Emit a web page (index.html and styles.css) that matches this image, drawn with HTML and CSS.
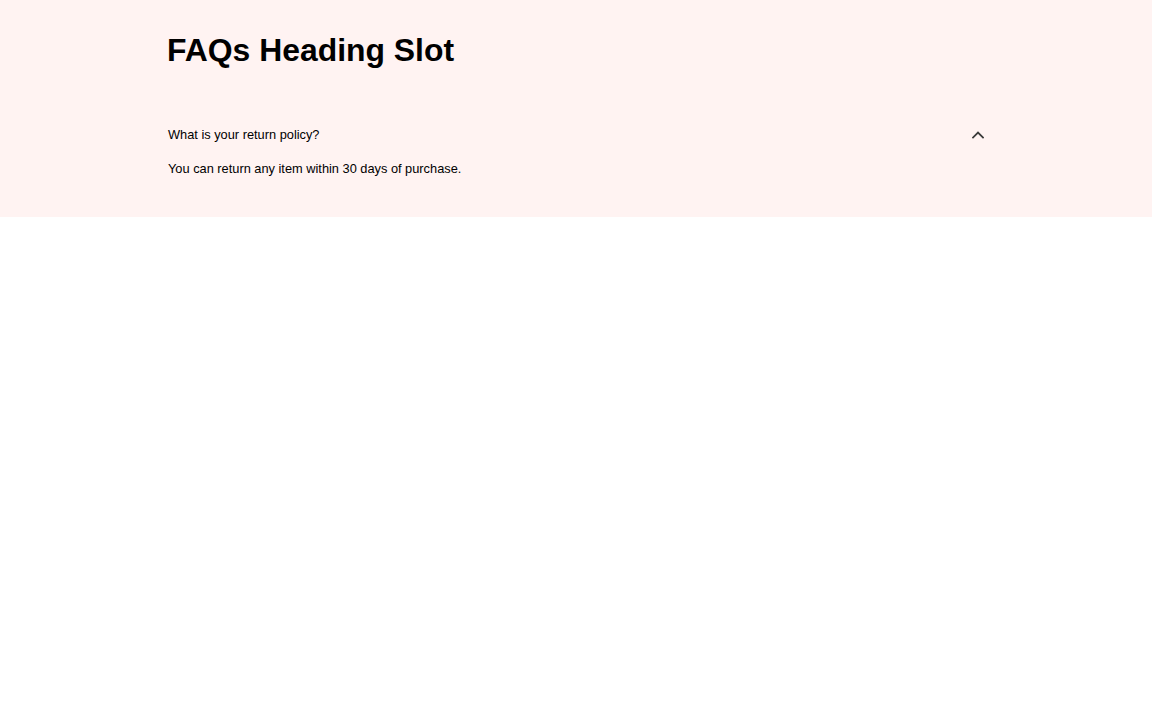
FILE: index.html
```html
<!DOCTYPE html>
<html lang="en">
<head>
<meta charset="utf-8">
<title>FAQs</title>
<link rel="stylesheet" href="styles.css">
</head>
<body>
<section class="faqs">
  <div class="container">
    <h2 class="faqs-heading">FAQs Heading Slot</h2>
    <div class="faq-list">
      <div class="faq-item">
        <div class="faq-question">
          <span class="faq-question-text">What is your return policy?</span>
          <svg class="faq-chevron" width="12" height="12" viewBox="0 0 12 12" aria-hidden="true">
            <path d="M1 8.6 L6 3.6 L11 8.6" fill="none" stroke="#3a3a3a" stroke-width="1.8" stroke-linecap="square" stroke-linejoin="miter"/>
          </svg>
        </div>
        <p class="faq-answer">You can return any item within 30 days of purchase.</p>
      </div>
    </div>
  </div>
</section>
</body>
</html>
```

FILE: styles.css
```css
html, body {
  margin: 0;
  padding: 0;
  background: #ffffff;
  font-family: "Liberation Sans", Arial, sans-serif;
  color: #000;
}

.faqs {
  background: #fff3f2;
  padding: 32px 0 41px;
}

.container {
  width: 816px;
  margin: 0 auto;
}

.faqs-heading {
  margin: 0 0 0 -1px;
  font-size: 31.9px;
  line-height: 37px;
  font-weight: 700;
}

.faq-list {
  margin-top: 58px;
}

.faq-question {
  display: flex;
  align-items: center;
  justify-content: space-between;
  font-size: 12.8px;
  line-height: 15px;
}

.faq-chevron {
  display: block;
  flex: none;
}

.faq-answer {
  margin: 19px 0 0;
  font-size: 12.8px;
  line-height: 15px;
}
```
